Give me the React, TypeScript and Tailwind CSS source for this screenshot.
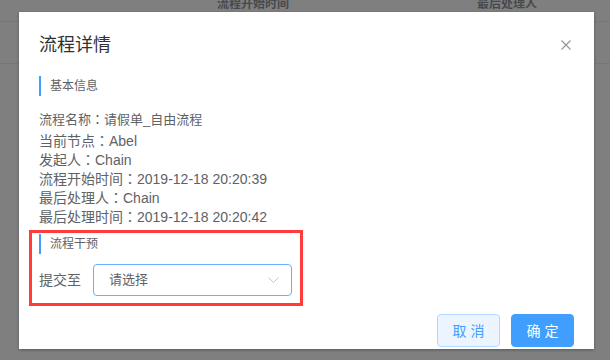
import React from "react";

function SectionTitle({ text }: { text: string }) {
  return (
    <div className="flex items-center h-[20px]">
      <div className="w-[2px] h-[20px] bg-[#409eff]" />
      <span className="ml-[9px] text-[12px] leading-[20px] text-[#606266]">{text}</span>
    </div>
  );
}

function Line({ label, value, h }: { label: string; value: string; h: string }) {
  return (
    <div className={h + " whitespace-nowrap"}>
      {label}
      <span className="font-['Noto_Sans_CJK_TC',sans-serif]">：</span>
      {value}
    </div>
  );
}

export default function App() {
  const lines: [string, string][] = [
    ["当前节点", "Abel"],
    ["发起人", "Chain"],
    ["流程开始时间", "2019-12-18 20:20:39"],
    ["最后处理人", "Chain"],
    ["最后处理时间", "2019-12-18 20:20:42"],
  ];
  return (
    <div className="relative w-[610px] h-[360px] overflow-hidden bg-white font-['Liberation_Sans','Noto_Sans_CJK_SC',sans-serif]">
      {/* underlying page */}
      <div className="flex h-[22px] border-b border-[#ebeef5]">
        <div className="w-[217px]" />
        <div className="w-[260px] text-[12px] leading-[12px] font-bold text-[#909399] mt-[-2px]">流程开始时间</div>
        <div className="text-[12px] leading-[12px] font-bold text-[#909399] mt-[-2px]">最后处理人</div>
      </div>
      <div className="h-[42px] border-b border-[#ebeef5]" />

      {/* overlay */}
      <div className="absolute inset-0 bg-black/50" />

      {/* dialog */}
      <div className="absolute left-[19px] top-[12px] w-[575px] h-[337px] bg-white shadow-[0_1px_3px_rgba(0,0,0,0.3)] flex flex-col px-[20px]">
        <div className="flex items-start justify-between pt-[20px] h-[46px]">
          <div className="text-[18px] leading-[26px] text-[#303133]">流程详情</div>
          <svg width="10" height="10" viewBox="0 0 10 10" className="mt-[8px] mr-[3px]">
            <path d="M0.5 0.5 L9.5 9.5 M9.5 0.5 L0.5 9.5" stroke="#909399" strokeWidth="1.1" fill="none" />
          </svg>
        </div>

        <div className="mt-[18px]">
          <SectionTitle text="基本信息" />
        </div>

        <div className="mt-[13px] text-[13px] leading-[20px] text-[#606266]">
          <Line label="流程名称" value="请假单_自由流程" h="h-[20px]" />
        </div>
        <div className="mt-[2px] flex flex-col text-[14px] leading-[19px] text-[#606266]">
          {lines.map(([l, v]) => (
            <Line key={l} label={l} value={v} h="h-[19px]" />
          ))}
        </div>

        <div className="mt-[4px] ml-[-10px] w-[274px] h-[76px] border-[3px] border-[#ff3b3b] pl-[7px] pt-[1px]">
          <SectionTitle text="流程干预" />
          <div className="mt-[10px] flex items-center h-[32px]">
            <span className="text-[14px] leading-[20px] text-[#606266]">提交至</span>
            <div className="ml-[12px] w-[199px] h-[32px] rounded-[4px] border border-[#66b1ff] flex items-center justify-between pl-[15px] pr-[12px]">
              <span className="text-[13px] leading-[20px] text-[#606266]">请选择</span>
              <svg width="11" height="6" viewBox="0 0 11 6">
                <path d="M0.5 0.5 L5.5 5.5 L10.5 0.5" stroke="#c0c4cc" strokeWidth="1" fill="none" />
              </svg>
            </div>
          </div>
        </div>

        <div className="mt-[8px] flex justify-end gap-[11px]">
          <button className="w-[63px] h-[33px] rounded-[4px] border border-[#b3d8ff] bg-[#ecf5ff] text-[14px] leading-[20px] text-[#409eff] flex items-center justify-center tracking-[4px] pl-[4px]">
            取消
          </button>
          <button className="w-[63px] h-[33px] rounded-[4px] border border-[#409eff] bg-[#409eff] text-[14px] leading-[20px] text-white flex items-center justify-center tracking-[4px] pl-[4px]">
            确定
          </button>
        </div>
      </div>
    </div>
  );
}
